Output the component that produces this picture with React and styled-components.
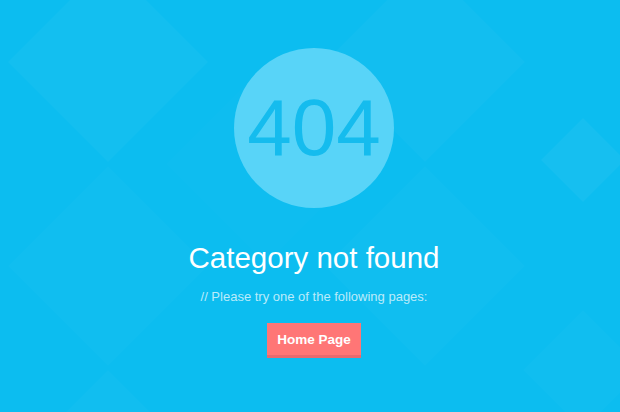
import React from 'react'
import styled, { createGlobalStyle } from 'styled-components'

const GlobalStyle = createGlobalStyle`
  html, body {
    margin: 0;
    padding: 0;
    background: #0dbef0;
  }
  body {
    font-family: Arial, "Liberation Sans", sans-serif;
  }
`

const Page = styled.div`
  position: relative;
  width: 620px;
  height: 412px;
  overflow: hidden;
  background: #0cbdf0;
`

const Pattern = styled.svg`
  position: absolute;
  top: 0;
  left: 0;
  width: 620px;
  height: 412px;
`

const Content = styled.div`
  position: relative;
  display: flex;
  flex-direction: column;
  align-items: center;
  padding: 48px 0 0 8px;
`

const Circle = styled.div`
  width: 160px;
  height: 160px;
  border-radius: 50%;
  background: #58d4f8;
  display: flex;
  align-items: center;
  justify-content: center;
  color: #15bcee;
  font-size: 80px;
  line-height: 1;
`

const Title = styled.h1`
  margin: 33px 0 0;
  font-size: 29.5px;
  font-weight: normal;
  color: #fff;
  line-height: 34px;
`

const Subtitle = styled.p`
  margin: 14px 0 0;
  font-size: 13px;
  color: rgba(255, 255, 255, 0.72);
`

const Button = styled.a`
  margin-top: 19px;
  display: inline-flex;
  align-items: center;
  justify-content: center;
  width: 94px;
  height: 32px;
  background: #ff7676;
  border-bottom: 3px solid #e86a6e;
  color: #fff;
  font-size: 13.5px;
  font-weight: bold;
  text-decoration: none;
`

const diamonds = [
  { x: 108, y: 62, r: 100, o: 0.03 },
  { x: 108, y: 266, r: 100, o: 0.018 },
  { x: 425, y: 62, r: 100, o: 0.028 },
  { x: 425, y: 266, r: 100, o: 0.02 },
  { x: 266, y: 164, r: 100, o: 0.012 },
  { x: 583, y: 160, r: 42, o: 0.045 },
  { x: 108, y: 470, r: 100, o: 0.025 },
  { x: 583, y: 370, r: 60, o: 0.02 },
]

export default function App() {
  return (
    <>
      <GlobalStyle />
      <Page>
        <Pattern viewBox="0 0 620 412">
          {diamonds.map((d, i) => (
            <polygon
              key={i}
              points={`${d.x},${d.y - d.r} ${d.x + d.r},${d.y} ${d.x},${d.y + d.r} ${d.x - d.r},${d.y}`}
              fill="#ffffff"
              fillOpacity={d.o}
            />
          ))}
        </Pattern>
        <Content>
          <Circle>404</Circle>
          <Title>Category not found</Title>
          <Subtitle>// Please try one of the following pages:</Subtitle>
          <Button href="#">Home Page</Button>
        </Content>
      </Page>
    </>
  )
}
